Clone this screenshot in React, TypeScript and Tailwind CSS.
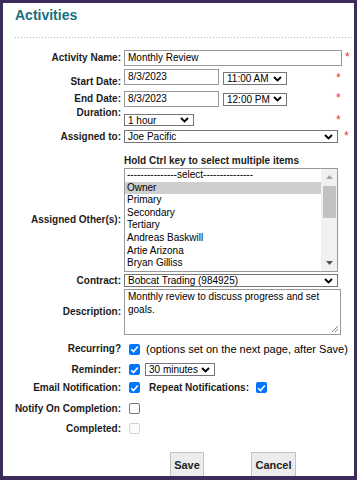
import React from 'react';

function Label({ children, className = '' }: { children: React.ReactNode; className?: string }) {
    return (
        <div className={`w-[118px] shrink-0 text-right text-[10px] font-bold leading-[12px] text-[#1c1c1c] ${className}`}>
            {children}
        </div>
    );
}

function Chevron() {
    return (
        <svg width="9" height="6" viewBox="0 0 9 6" className="shrink-0">
            <path d="M1 1l3.5 3.5L8 1" fill="none" stroke="#000" strokeWidth="1.9" />
        </svg>
    );
}

function Select({ value, className = '' }: { value: string; className?: string }) {
    return (
        <div
            className={`flex shrink-0 items-center justify-between border border-[#767676] bg-white pl-[3px] pr-[4px] text-[10px] leading-[11px] text-black ${className}`}
        >
            <span>{value}</span>
            <Chevron />
        </div>
    );
}

function Star({ className = '' }: { className?: string }) {
    return <span className={`shrink-0 self-start text-[12px] leading-[12px] text-[#e8333a] ${className}`}>*</span>;
}

function Check({ checked = false, disabled = false, className = '' }: { checked?: boolean; disabled?: boolean; className?: string }) {
    if (checked) {
        return (
            <div className={`flex h-[11px] w-[11px] shrink-0 items-center justify-center rounded-[2px] bg-[#0075ff] ${className}`}>
                <svg width="9" height="8" viewBox="0 0 9 8">
                    <path d="M1.2 4.2l2.3 2.3L7.8 1.4" fill="none" stroke="#fff" strokeWidth="1.6" />
                </svg>
            </div>
        );
    }
    return (
        <div
            className={`h-[11px] w-[11px] shrink-0 rounded-[2px] border ${
                disabled ? 'border-[#d4d4d4] bg-[#fbfbfb]' : 'border-[#767676] bg-white'
            } ${className}`}
        />
    );
}

const others = ['Owner', 'Primary', 'Secondary', 'Tertiary', 'Andreas Baskwill', 'Artie Arizona', 'Bryan Gilliss'];

export default function App() {
    return (
        <div className="h-[480px] w-[357px] overflow-hidden bg-[#3b2c5c] pb-[4px] pl-[3px] pr-[3px] pt-[3px] font-['Liberation_Sans',Arial,sans-serif]">
            <div className="h-full w-full overflow-hidden bg-white">
                <div className="pl-[12px] pt-[3px] text-[14px] font-bold leading-[18px] text-[#13707f]">Activities</div>
                <div className="ml-[12px] mt-[13px] h-px bg-[linear-gradient(to_right,#b4b4b4_1px,transparent_1px)] bg-[length:3px_1px]" />

                {/* activity name */}
                <div className="mt-[12px] flex h-[16px] items-center">
                    <Label>Activity Name:</Label>
                    <div className="ml-[3px] h-[16px] w-[218px] shrink-0 border border-[#999] pl-[3px] text-[10px] leading-[14px] text-black">
                        Monthly Review
                    </div>
                    <Star className="ml-[3px] mt-[1px]" />
                </div>

                {/* start date */}
                <div className="mt-[3px] flex h-[19px]">
                    <Label className="self-end">Start Date:</Label>
                    <div className="ml-[3px] h-[16px] w-[95px] shrink-0 border border-[#999] pl-[3px] text-[10px] leading-[14px] text-black">
                        8/3/2023
                    </div>
                    <Select value="11:00 AM" className="ml-[4px] mt-[3px] h-[13px] w-[64px]" />
                    <Star className="ml-[49px] mt-[3px]" />
                </div>

                {/* end date */}
                <div className="mt-[3px] flex h-[16px] items-center">
                    <Label>End Date:</Label>
                    <div className="ml-[3px] h-[16px] w-[95px] shrink-0 border border-[#999] pl-[3px] text-[10px] leading-[14px] text-black">
                        8/3/2023
                    </div>
                    <Select value="12:00 PM" className="ml-[4px] h-[13px] w-[64px]" />
                    <Star className="ml-[49px] mt-[1px]" />
                </div>

                {/* duration */}
                <div className="flex h-[19px]">
                    <Label className="self-start">Duration:</Label>
                    <Select value="1 hour" className="ml-[3px] h-[12px] w-[70px] self-end" />
                    <Star className="ml-[142px] mt-[7px]" />
                </div>

                {/* assigned to */}
                <div className="mt-[4px] flex h-[13px] items-center">
                    <Label>Assigned to:</Label>
                    <Select value="Joe Pacific" className="ml-[3px] h-[13px] w-[214px]" />
                    <Star className="ml-[6px]" />
                </div>

                <div className="mt-[12px] pl-[121px] text-[10px] font-bold leading-[12px] text-[#1c1c1c]">
                    Hold Ctrl key to select multiple items
                </div>

                {/* assigned others listbox */}
                <div className="mt-[1px] flex h-[104px] items-center">
                    <Label>Assigned Other(s):</Label>
                    <div className="ml-[3px] flex h-[104px] w-[214px] shrink-0 overflow-hidden border border-[#999] bg-white">
                        <div className="flex-1 overflow-hidden text-[10px] leading-[12.6px] text-black">
                            <div className="pl-[2px]">---------------select---------------</div>
                            {others.map((name, index) => (
                                <div key={index} className={`pl-[2px] ${index === 0 ? 'bg-[#cecece]' : ''}`}>
                                    {name}
                                </div>
                            ))}
                        </div>
                        <div className="flex w-[16px] shrink-0 flex-col bg-[#f1f1f1]">
                            <div className="flex h-[16px] items-center justify-center">
                                <svg width="7" height="4" viewBox="0 0 7 4">
                                    <path d="M0 4L3.5 0L7 4z" fill="#a3a3a3" />
                                </svg>
                            </div>
                            <div className="ml-[2px] mr-[1px] mt-[1px] h-[32px] bg-[#c1c1c1]" />
                            <div className="mt-auto flex h-[16px] items-center justify-center">
                                <svg width="7" height="4" viewBox="0 0 7 4">
                                    <path d="M0 0L3.5 4L7 0z" fill="#505050" />
                                </svg>
                            </div>
                        </div>
                    </div>
                </div>

                {/* contract */}
                <div className="mt-[2px] flex h-[13px] items-center">
                    <Label>Contract:</Label>
                    <Select value="Bobcat Trading (984925)" className="ml-[3px] h-[13px] w-[214px]" />
                </div>

                {/* description */}
                <div className="mt-[2px] flex h-[46px] items-center">
                    <Label>Description:</Label>
                    <div className="relative ml-[3px] h-[46px] w-[217px] shrink-0 border border-[#999] pl-[3px] pt-[1px] text-[10px] leading-[12.5px] text-black">
                        Monthly review to discuss progress and set
                        <br />
                        goals.
                        <svg width="8" height="8" viewBox="0 0 8 8" className="absolute bottom-[1px] right-[1px]">
                            <path d="M7 1L1 7M7 4L4 7" stroke="#888" strokeWidth="1" />
                        </svg>
                    </div>
                </div>

                {/* recurring */}
                <div className="mt-[8px] flex h-[12px] items-center">
                    <Label>Recurring?</Label>
                    <Check checked className="ml-[8px]" />
                    <span className="ml-[6px] text-[11px] leading-[12px] text-black">
                        (options set on the next page, after Save)
                    </span>
                </div>

                {/* reminder */}
                <div className="mt-[8px] flex h-[13px] items-center">
                    <Label>Reminder:</Label>
                    <Check checked className="ml-[8px]" />
                    <Select value="30 minutes" className="ml-[5px] h-[13px] w-[70px]" />
                </div>

                {/* email */}
                <div className="mt-[6px] flex h-[11px] items-center">
                    <Label>Email Notification:</Label>
                    <Check checked className="ml-[8px]" />
                    <span className="ml-[9px] text-[10px] font-bold leading-[12px] text-[#1c1c1c]">Repeat Notifications:</span>
                    <Check checked className="ml-[7px]" />
                </div>

                <div className="mt-[10px] flex h-[11px] items-center">
                    <Label>Notify On Completion:</Label>
                    <Check className="ml-[8px]" />
                </div>

                <div className="mt-[9px] flex h-[11px] items-center">
                    <Label>Completed:</Label>
                    <Check disabled className="ml-[8px]" />
                </div>

                {/* buttons */}
                <div className="mt-[18px] flex pl-[167px]">
                    <button className="h-[26px] w-[34px] border border-[#c4c4c4] bg-[#ececec] text-[11px] font-bold text-[#222]">
                        Save
                    </button>
                    <button className="ml-[47px] h-[26px] w-[45px] border border-[#c4c4c4] bg-[#ececec] text-[11px] font-bold text-[#222]">
                        Cancel
                    </button>
                </div>
            </div>
        </div>
    );
}
